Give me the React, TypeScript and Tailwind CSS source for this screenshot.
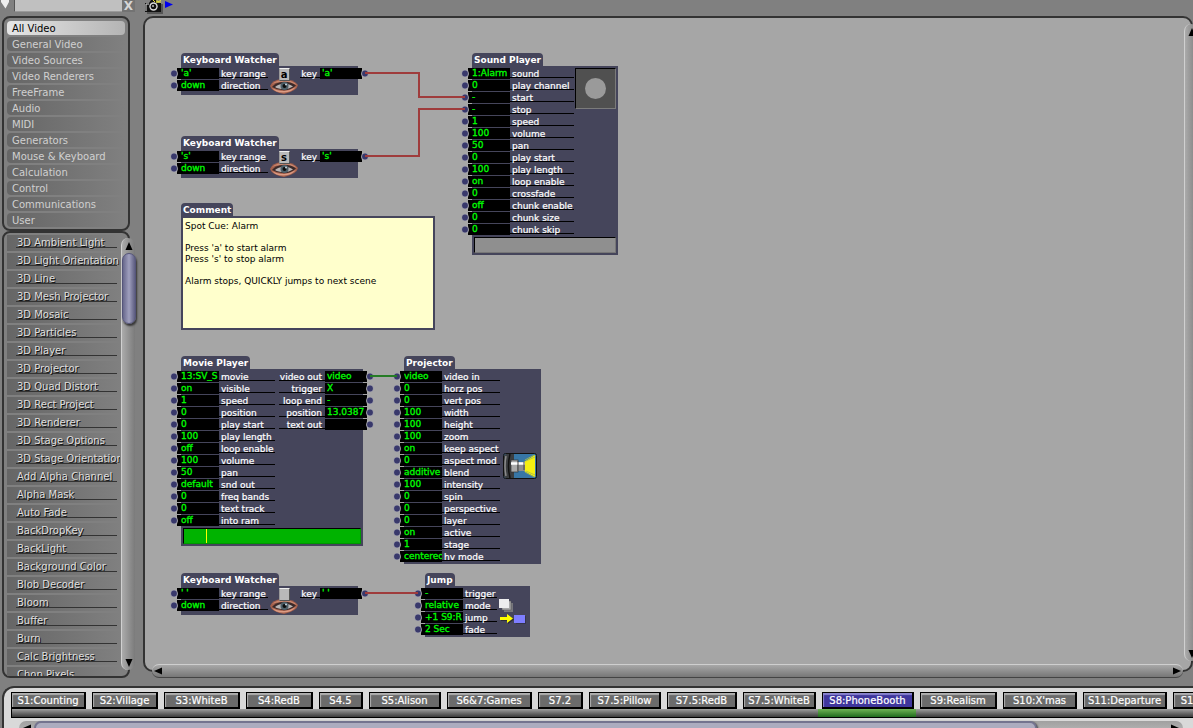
import React, { useId, useState } from "react";

const categories = [
  "All Video", "General Video", "Video Sources", "Video Renderers", "FreeFrame",
  "Audio", "MIDI", "Generators", "Mouse & Keyboard", "Calculation", "Control",
  "Communications", "User",
];

const actors = [
  "3D Ambient Light", "3D Light Orientation", "3D Line", "3D Mesh Projector",
  "3D Mosaic", "3D Particles", "3D Player", "3D Projector", "3D Quad Distort",
  "3D Rect Project", "3D Renderer", "3D Stage Options", "3D Stage Orientation",
  "Add Alpha Channel", "Alpha Mask", "Auto Fade", "BackDropKey", "BackLight",
  "Background Color", "Blob Decoder", "Bloom", "Buffer", "Burn",
  "Calc Brightness", "Chop Pixels",
];

const scenes = [
  { name: "S1:Counting", width: 75 },
  { name: "S2:Village", width: 66 },
  { name: "S3:WhiteB", width: 76 },
  { name: "S4:RedB", width: 67 },
  { name: "S4.5", width: 44 },
  { name: "S5:Alison", width: 72 },
  { name: "S6&7:Games", width: 85 },
  { name: "S7.2", width: 45 },
  { name: "S7.5:Pillow", width: 72 },
  { name: "S7.5:RedB", width: 70 },
  { name: "S7.5:WhiteB", width: 73 },
  { name: "S8:PhoneBooth", width: 92 },
  { name: "S9:Realism", width: 77 },
  { name: "S10:X'mas", width: 74 },
  { name: "S11:Departure", width: 84 },
  { name: "S12:Finale", width: 68 },
];

type Field = [label: string, value: string];

const soundInputs: Field[] = [
  ["sound", "1:Alarm"], ["play channel", "0"], ["start", "-"], ["stop", "-"],
  ["speed", "1"], ["volume", "100"], ["pan", "50"], ["play start", "0"],
  ["play length", "100"], ["loop enable", "on"], ["crossfade", "0"],
  ["chunk enable", "off"], ["chunk size", "0"], ["chunk skip", "0"],
];

const movieInputs: Field[] = [
  ["movie", "13:SV_S"], ["visible", "on"], ["speed", "1"], ["position", "0"],
  ["play start", "0"], ["play length", "100"], ["loop enable", "off"],
  ["volume", "100"], ["pan", "50"], ["snd out", "default"],
  ["freq bands", "0"], ["text track", "0"], ["into ram", "off"],
];

const movieOutputs: Field[] = [
  ["video out", "video"], ["trigger", "X"], ["loop end", "-"],
  ["position", "13.0387"], ["text out", ""],
];

const projectorInputs: Field[] = [
  ["video in", "video"], ["horz pos", "0"], ["vert pos", "0"],
  ["width", "100"], ["height", "100"], ["zoom", "100"],
  ["keep aspect", "on"], ["aspect mod", "0"], ["blend", "additive"],
  ["intensity", "100"], ["spin", "0"], ["perspective", "0"], ["layer", "0"],
  ["active", "on"], ["stage", "1"], ["hv mode", "centered"],
];

const jumpInputs: Field[] = [
  ["trigger", "-"], ["mode", "relative"], ["jump", "+1 S9:R"], ["fade", "2 Sec"],
];

const Port = ({ flip = false }: { flip?: boolean }) => (
  <svg width="9" height="12" viewBox="0 0 9 12" className={flip ? "shrink-0 -scale-x-100" : "shrink-0"}>
    <rect x="7" y="0" width="2" height="11" fill="#000" />
    <path d="M6 2h1q1.500 3.500 0 7H6z" fill="#b4b4b4" />
    <circle cx="4" cy="5.500" r="3.500" fill="#9797a8" />
    <circle cx="4" cy="5.500" r="2.900" fill="#38386b" />
  </svg>
);

const InputRow = ({ field: [label, value] }: { field: Field }) => {
  const id = useId();
  return (
    <div className="flex h-3">
      <Port />
      <input
        id={id}
        defaultValue={value}
        className="h-[11px] w-10 shrink-0 bg-black pl-0.5 pb-px leading-[10px] text-[#00ff00] outline-none [-webkit-text-stroke:0.3px_#00ff00]"
      />
      <label htmlFor={id} className="h-2.5 grow border-b border-black pl-0.5 leading-3 whitespace-nowrap text-white [-webkit-text-stroke:0.2px_white]">
        {label}
      </label>
    </div>
  );
};

const OutputRow = ({ field: [label, value] }: { field: Field }) => {
  const id = useId();
  return (
    <div className="flex h-3">
      <label htmlFor={id} className="h-2.5 grow border-b border-black pr-[3px] text-right leading-3 whitespace-nowrap text-white [-webkit-text-stroke:0.2px_white]">
        {label}
      </label>
      <output id={id} className="block h-[11px] w-10 shrink-0 overflow-hidden bg-black pl-0.5 leading-[10px] whitespace-pre text-[#00ff00] [-webkit-text-stroke:0.3px_#00ff00]">
        {value}
      </output>
      <Port flip />
    </div>
  );
};

const Inputs = ({ fields, className }: { fields: Field[]; className: string }) => (
  <div className={`-ml-[11px] shrink-0 ${className}`}>
    {fields.map((field) => (
      <InputRow key={field[0]} field={field} />
    ))}
  </div>
);

const Outputs = ({ fields, className }: { fields: Field[]; className: string }) => (
  <div className={`-mr-[11px] ml-auto shrink-0 ${className}`}>
    {fields.map((field) => (
      <OutputRow key={field[0]} field={field} />
    ))}
  </div>
);

type ActorProps = {
  title: string;
  className: string;
  footer?: React.ReactNode;
  children: React.ReactNode;
};

// className carries the place on the patch canvas and the width of the body
const Actor = ({ title, className, footer, children }: ActorProps) => (
  <article className={`absolute text-[9px] ${className}`}>
    <h2 className="h-[13px] w-fit rounded-t bg-[#45455b] px-0.5 leading-[14px] font-bold whitespace-nowrap text-white">
      {title}
    </h2>
    <div className="bg-[#45455b] pt-0.5 pb-px">
      <div className="flex">{children}</div>
      {footer}
    </div>
  </article>
);

const Eye = ({ letter }: { letter: string }) => (
  <div className="ml-0.5 flex w-7 flex-col items-center">
    <kbd className="z-10 h-[13px] w-[11px] border border-t-[#eee] border-r-[#555] border-b-[#555] border-l-[#999] bg-[#b9b9b9] text-center font-['DejaVu_Sans',sans-serif] text-[10px] leading-[11px] font-bold text-black">
      {letter}
    </kbd>
    <svg width="28" height="15" viewBox="0 0 28 15" className="-mt-0.5">
      <path d="M0 7Q2 1 12 0Q24 0 28 6Q27 12 14 15Q2 13 0 7z" fill="#a35f4b" />
      <path d="M2 5Q7 0.500 15 1Q23 1.500 27 6Q20 2.500 13 3Q6 3 2 5z" fill="#c98871" />
      <path d="M2 9Q6 14 14 13.500Q22 13 26 8Q20 11.500 14 12Q7 12 2 9z" fill="#dc9c84" />
      <path d="M2 8Q6 3 14 2.800Q22 3 26 6.500Q21 11 14 11.300Q7 11 2 8z" fill="#3a2a2a" />
      <path d="M5 8Q8 5 14 4.500Q20 5 23 7.500Q19 10 14 10Q8 10 5 8z" fill="#b9b5b5" />
      <circle cx="14.500" cy="7" r="4" fill="#4d5f68" />
      <circle cx="14.500" cy="7" r="2" fill="#0b0b0b" />
      <circle cx="16" cy="5.500" r="0.900" fill="#d7e5ee" />
    </svg>
  </div>
);

const KeyboardWatcher = ({ letter, className }: { letter: string; className: string }) => (
  <Actor title="Keyboard Watcher" className={`w-[177px] ${className}`}>
    <Inputs className="w-[98px]" fields={[["key range", `'${letter}'`], ["direction", "down"]]} />
    <Eye letter={letter} />
    <Outputs className="w-[69px]" fields={[["key", `'${letter}'`]]} />
  </Actor>
);

const ProjectorIcon = () => (
  <svg width="34" height="26" viewBox="0 0 34 26" className="mt-[82px] ml-[3px]">
    <rect x="0.500" y="0.500" width="33" height="25" rx="2" fill="#3776a6" stroke="#111" />
    <path d="M1 3Q1 1 4 1H11V25H4Q1 25 1 23z" fill="#3b3d40" />
    <path d="M3 3Q1 13 3 23" stroke="#8b8b8b" strokeWidth="1.500" fill="none" />
    <path d="M7 1Q4 13 7 25" stroke="#111" strokeWidth="1.500" fill="none" />
    <path d="M21 9L32 2V24L21 18z" fill="#f5ef10" />
    <path d="M22 7L31 2M23 8L32 4M22 19L31 24M23 18L32 22" stroke="#a9bd4a" strokeWidth="0.800" />
    <rect x="8" y="7" width="7" height="12" fill="#a9a9a9" stroke="#333" strokeWidth="0.700" />
    <rect x="15" y="9" width="7" height="9" fill="#8f8f8f" />
    <path d="M8 10.500H22" stroke="#fff" strokeWidth="2.500" />
    <path d="M15 8V18M21 9V17" stroke="#444" />
  </svg>
);

const JumpIcon = () => (
  <svg width="28" height="28" viewBox="0 0 28 28" className="mt-2.5 ml-0.5">
    <path d="M5 5H14V14H5z" fill="#77777c" />
    <path d="M3 3H12V12H3z" fill="#a9a9a9" stroke="#555" strokeWidth="0.500" />
    <path d="M0 1H10V10H0z" fill="#eee" />
    <path d="M2 20H9V17L15 21.500L9 26V23H2z" fill="#2c2c3a" />
    <path d="M1 19H8V16L14 20.500L8 25V22H1z" fill="#ffff00" />
    <path d="M17 18H27V26H17z" fill="#34344a" />
    <path d="M15 17H26V25H15z" fill="#7e7eff" />
  </svg>
);

const Wires = () => (
  <svg className="pointer-events-none absolute inset-0 size-full" fill="none" strokeWidth="2">
    <path d="M220 55H274V79H320" stroke="#9f3c3c" />
    <path d="M220 138H274V91H320" stroke="#9f3c3c" />
    <path d="M220 575H273" stroke="#9f3c3c" />
    <path d="M225 358H252" stroke="#257c25" />
  </svg>
);

const Camera = () => (
  <svg width="18" height="14" viewBox="0 0 18 14">
    <path d="M2 4H18V14H2z" fill="#555" />
    <path d="M0 3H4L6 0H11L13 3H16V12H0z" fill="#111" />
    <path d="M1 4H4M1 4V11" stroke="#ddd" />
    <circle cx="8.500" cy="6.500" r="4.200" fill="#ddd" />
    <circle cx="8.500" cy="6.500" r="2.800" fill="#111" />
    <circle cx="8" cy="6" r="1" fill="#bbb" />
    <path d="M8 0L10 2M12 0L12 3M16 0L13 2M11 2H16" stroke="#e8e23a" />
  </svg>
);

const Arrow = ({ className }: { className: string }) => (
  <svg width="8" height="8" viewBox="0 0 8 8" className={`shrink-0 ${className}`}>
    <path d="M4 0L7.500 8H0.500z" fill="#000" />
  </svg>
);

const VerticalBar = ({ className, children }: { className: string; children?: React.ReactNode }) => (
  <div className={`absolute flex w-3.5 flex-col items-center rounded-full border-l border-[#d0d0d0] bg-linear-to-r from-[#ababab] to-[#7b7b7b] ${className}`}>
    <button aria-label="Scroll up" className="flex h-[15px] items-center"><Arrow className="" /></button>
    {children}
    <button aria-label="Scroll down" className="mt-auto flex h-[15px] items-center"><Arrow className="rotate-180" /></button>
  </div>
);

const Palette = () => {
  const [selected, setSelected] = useState("All Video");
  return (
    <aside className="ml-0.5 flex w-32 shrink-0 flex-col text-[10px]">
      <nav className="flex shrink-0 flex-col gap-0.5 rounded-lg border-2 border-[#333] px-[3px] pt-[3px] pb-0.5">
        {categories.map((category) => (
          <button
            key={category}
            onClick={() => setSelected(category)}
            className={
              category === selected
                ? "h-3.5 rounded bg-linear-to-r from-[#e6e6e6] to-[#b4b4b4] pl-[5px] text-left leading-4 text-black"
                : "h-3.5 rounded bg-linear-to-r from-[#666] to-[#808080] pl-[5px] text-left leading-4 text-[#d0d0d0]"
            }
          >
            {category}
          </button>
        ))}
      </nav>
      <div className="relative min-h-0 grow rounded-lg border-2 border-[#333]">
        <ul className="h-full overflow-hidden pt-0.5 pr-2 pl-[3px]">
          {actors.map((actor) => (
            <li key={actor} className="mb-0.5 h-4 overflow-hidden bg-linear-to-r from-[#666] to-[#808080] pl-[9px]">
              <button className="block h-[13px] w-[101px] border-b border-[#333] pl-px text-left leading-[15px] whitespace-nowrap text-[#dedede] [text-shadow:1px_1px_0_#111]">
                {actor}
              </button>
            </li>
          ))}
        </ul>
        <VerticalBar className="top-[5px] -right-[7px] bottom-1.5">
          <div className="h-[71px] w-3.5 rounded-full border border-[#55557a] bg-linear-to-r from-[#68688c] via-[#a0a0be] to-[#5c5c80] shadow-[1px_2px_2px_#333]" />
        </VerticalBar>
      </div>
    </aside>
  );
};

const Patch = () => (
  <section className="relative mb-1.5 ml-[13px] grow rounded-[10px] border-2 border-[#333] bg-[#a6a6a6]">
    <KeyboardWatcher letter="a" className="top-[35px] left-9" />
    <KeyboardWatcher letter="s" className="top-[118px] left-9" />

    <Actor
      title="Sound Player"
      className="top-[35px] left-[327px] w-[146px]"
      footer={<div className="mx-0.5 mt-px mb-px h-4 border border-t-black border-r-[#777] border-b-[#777] border-l-black bg-[#8f8f8f]" />}
    >
      <Inputs className="w-[113px]" fields={soundInputs} />
      <div className="ml-px flex size-[41px] items-center justify-center border border-t-black border-r-[#7b7b7b] border-b-[#7b7b7b] border-l-black bg-[#505050]">
        <div className="size-[21px] rounded-full bg-[#9a9a9a]" />
      </div>
    </Actor>

    <article className="absolute top-[185px] left-9 w-[254px] text-[9px]">
      <h2 className="h-[13px] w-fit rounded-t bg-[#45455b] px-0.5 leading-[14px] font-bold text-white">
        <label htmlFor="comment">Comment</label>
      </h2>
      <textarea
        id="comment"
        className="block h-[114px] w-full resize-none border-2 border-[#45455b] bg-[#ffffcc] px-0.5 pt-[3px] leading-[11px] text-black outline-none"
        defaultValue={"Spot Cue: Alarm\n\nPress 'a' to start alarm\nPress 's' to stop alarm\n\nAlarm stops, QUICKLY jumps to next scene"}
      />
    </article>

    <Actor
      title="Movie Player"
      className="top-[338px] left-9 w-[182px]"
      footer={
        <div className="mx-0.5 mt-px mb-px h-4 border border-t-black border-r-[#009800] border-b-[#009800] border-l-black bg-[#00b300] pl-[22px]">
          <div className="h-full w-px bg-[#ffff00]" />
        </div>
      }
    >
      <Inputs className="w-[105px]" fields={movieInputs} />
      <Outputs className="w-[95px]" fields={movieOutputs} />
    </Actor>

    <Actor title="Projector" className="top-[338px] left-[259px] w-[137px]">
      <Inputs className="w-[107px]" fields={projectorInputs} />
      <ProjectorIcon />
    </Actor>

    <KeyboardWatcher letter=" " className="top-[555px] left-9" />

    <Actor title="Jump" className="top-[555px] left-[280px] w-[105px]">
      <Inputs className="w-[83px]" fields={jumpInputs} />
      <JumpIcon />
    </Actor>

    <Wires />

    <VerticalBar className="top-1.5 -right-[7px] bottom-[9px]" />
    <div className="absolute right-2 -bottom-2 left-[7px] flex h-3.5 items-center justify-between rounded-full border-t border-b border-t-[#cfcfcf] border-b-[#444] bg-linear-to-b from-[#a8a8a8] to-[#777] px-0.5">
      <button aria-label="Scroll left"><Arrow className="-rotate-90" /></button>
      <button aria-label="Scroll right"><Arrow className="rotate-90" /></button>
    </div>
  </section>
);

const SceneBar = () => {
  const [current, setCurrent] = useState("S8:PhoneBooth");
  const index = scenes.findIndex((scene) => scene.name === current);
  const start = scenes.slice(0, index).reduce((sum, scene) => sum + scene.width + 6, 0);
  return (
    <footer className="ml-0.5 h-[42px] shrink-0 overflow-hidden rounded-tl-xl border-t-2 border-l-2 border-[#333] bg-[#d9d9d9] pt-1 pl-[7px]">
      <div className="flex gap-1.5">
        {scenes.map(({ name, width }) => (
          <button
            key={name}
            onClick={() => setCurrent(name)}
            style={{ width }}
            className={
              name === current
                ? "flex h-[17px] shrink-0 justify-center border border-r-2 border-b-2 border-black bg-[#3f369c] text-[10px] leading-4 whitespace-nowrap text-white shadow-[inset_1px_2px_1px_#8a84cf] [-webkit-text-stroke:0.2px_white]"
                : "flex h-[17px] shrink-0 justify-center border border-r-2 border-b-2 border-black bg-[#6b6b6b] text-[10px] leading-4 whitespace-nowrap text-white shadow-[inset_1px_2px_1px_#b0b0b0] [-webkit-text-stroke:0.2px_white]"
            }
          >
            {name}
          </button>
        ))}
      </div>
      <div className="flex h-[9px] border-b border-l border-black bg-linear-to-b from-[#a0a0a0] to-[#3c3c3c]">
        <div
          className="h-full bg-linear-to-b from-[#6fb455] to-[#1e6b1c]"
          style={{ width: scenes[index].width + 6, marginLeft: Math.max(start - 5, 0) }}
        />
      </div>
      <div className="mt-[3px] mr-2.5 ml-2 flex h-3.5 items-center justify-between rounded-full bg-linear-to-b from-[#a0a0a0] to-[#bbb] pr-1">
        <button aria-label="Scroll scenes left" className="w-[15px] pl-1"><Arrow className="-rotate-90" /></button>
        <div className="mr-auto h-full w-[86.5%] rounded-full border-2 border-[#74748f] bg-[#acacbf] shadow-[1px_1px_2px_#333]" />
        <button aria-label="Scroll scenes right"><Arrow className="rotate-90" /></button>
      </div>
    </footer>
  );
};

export default function App() {
  return (
    <div className="flex h-screen flex-col overflow-hidden bg-[#808080] font-['DejaVu_Sans',Verdana,sans-serif]">
      <header className="flex h-4 shrink-0 items-start">
        <svg width="14" height="9" viewBox="0 0 14 9">
          <path d="M1 0H9V2L5.500 8.500L1 2z" fill="#eee" />
        </svg>
        <input aria-label="Search actors" className="h-3 w-[108px] border-b border-l border-b-[#999] border-l-[#555] bg-[#c0c0c0] text-[9px] outline-none" />
        <button aria-label="Clear search" className="h-3 w-[13px] bg-[#737373] text-xs leading-[9px] font-bold text-[#d6d6d6]">X</button>
        <button aria-label="Snapshot" className="ml-2.5"><Camera /></button>
        <svg width="10" height="9" viewBox="0 0 10 9" className="ml-0.5">
          <path d="M0 1L8 4.500L0 8z" fill="#0000f0" />
        </svg>
      </header>
      <main className="flex min-h-0 grow pb-2">
        <Palette />
        <Patch />
      </main>
      <SceneBar />
    </div>
  );
}
